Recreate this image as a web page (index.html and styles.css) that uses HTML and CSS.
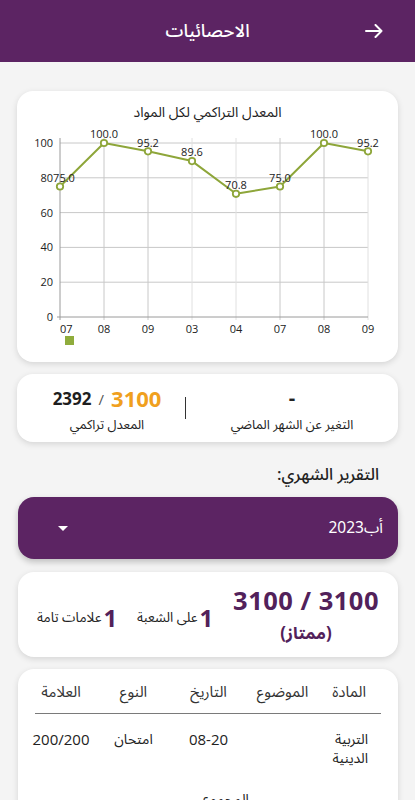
FILE: index.html
```html
<!DOCTYPE html>
<html lang="ar" dir="rtl">
<head>
<meta charset="utf-8">
<title>الاحصائيات</title>
<link rel="stylesheet" href="styles.css">
</head>
<body>
<header class="topbar">
  <span class="back" aria-label="رجوع">
    <svg width="18" height="14" viewBox="0 0 18 14"><path d="M1 7H16.5M10.5 1L16.5 7L10.5 13" fill="none" stroke="#fff" stroke-width="2" stroke-linecap="round" stroke-linejoin="round"/></svg>
  </span>
  <h1 class="title">الاحصائيات</h1>
  <span class="spacer"></span>
</header>
<main class="content">
  <section class="card chart-card">
    <svg class="chart" width="381" height="271" viewBox="0 0 381 271" direction="ltr">
      <text class="chart-title" x="190.5" y="26" text-anchor="middle" direction="rtl">المعدل التراكمي لكل المواد</text>
      <g class="grid-h">
        <line x1="43" y1="52" x2="351" y2="52"/>
        <line x1="43" y1="86.8" x2="351" y2="86.8"/>
        <line x1="43" y1="121.6" x2="351" y2="121.6"/>
        <line x1="43" y1="156.4" x2="351" y2="156.4"/>
        <line x1="43" y1="191.2" x2="351" y2="191.2"/>
      </g>
      <g class="grid-v">
        <line x1="87" y1="47" x2="87" y2="229"/>
        <line x1="131" y1="47" x2="131" y2="229"/>
        <line class="light" x1="175" y1="47" x2="175" y2="229"/>
        <line class="light" x1="219" y1="47" x2="219" y2="229"/>
        <line x1="263" y1="47" x2="263" y2="229"/>
        <line x1="307" y1="47" x2="307" y2="229"/>
        <line class="light" x1="351" y1="47" x2="351" y2="229"/>
      </g>
      <g class="axis">
        <line x1="43" y1="47" x2="43" y2="229"/>
        <line x1="40" y1="226" x2="351" y2="226"/>
      </g>
      <g class="ylab" text-anchor="end">
        <text x="36" y="230">0</text>
        <text x="36" y="195.2">20</text>
        <text x="36" y="160.4">40</text>
        <text x="36" y="125.6">60</text>
        <text x="36" y="90.8">80</text>
        <text x="36" y="56">100</text>
      </g>
      <g class="xlab" text-anchor="middle">
        <text x="43" y="242" text-anchor="start">07</text>
        <text x="87" y="242">08</text>
        <text x="131" y="242">09</text>
        <text x="175" y="242">03</text>
        <text x="219" y="242">04</text>
        <text x="263" y="242">07</text>
        <text x="307" y="242">08</text>
        <text x="351" y="242">09</text>
      </g>
      <polyline class="series" points="43,95.5 87,52 131,60.35 175,70.1 219,102.8 263,95.5 307,52 351,60.35"/>
      <g class="dots">
        <circle cx="43" cy="95.5" r="3.2"/>
        <circle cx="87" cy="52" r="3.2"/>
        <circle cx="131" cy="60.35" r="3.2"/>
        <circle cx="175" cy="70.1" r="3.2"/>
        <circle cx="219" cy="102.8" r="3.2"/>
        <circle cx="263" cy="95.5" r="3.2"/>
        <circle cx="307" cy="52" r="3.2"/>
        <circle cx="351" cy="60.35" r="3.2"/>
      </g>
      <g class="vlab" text-anchor="middle">
        <text x="47" y="91">75.0</text>
        <text x="87" y="47">100.0</text>
        <text x="131" y="55.5">95.2</text>
        <text x="175" y="65">89.6</text>
        <text x="219" y="98">70.8</text>
        <text x="263" y="90.5">75.0</text>
        <text x="307" y="47">100.0</text>
        <text x="351" y="55.5">95.2</text>
      </g>
      <rect class="legend" x="48" y="245" width="9" height="9"/>
    </svg>
  </section>

  <section class="card summary">
    <div class="sum-col sum-change">
      <div class="sum-val dash">-</div>
      <div class="sum-label">التغير عن الشهر الماضي</div>
    </div>
    <div class="divider"></div>
    <div class="sum-col sum-avg">
      <div class="sum-val" dir="ltr"><span class="of">2392</span><span class="slash">/</span><span class="main">3100</span></div>
      <div class="sum-label">المعدل تراكمي</div>
    </div>
  </section>

  <h2 class="section-title">التقرير الشهري:</h2>

  <div class="dropdown">
    <span class="dd-value">أب2023</span>
    <span class="caret"></span>
  </div>

  <section class="card stats">
    <div class="score">
      <div class="score-num" dir="ltr">3100 / 3100</div>
      <div class="score-grade">(ممتاز)</div>
    </div>
    <div class="stat"><span class="stat-num">1</span><span class="stat-label">على الشعبة</span></div>
    <div class="stat"><span class="stat-num">1</span><span class="stat-label">علامات تامة</span></div>
  </section>

  <section class="card table-card">
    <div class="trow thead">
      <span class="c1">المادة</span>
      <span class="c2">الموضوع</span>
      <span class="c3">التاريخ</span>
      <span class="c4">النوع</span>
      <span class="c5">العلامة</span>
    </div>
    <div class="thead-line"></div>
    <div class="trow tbody">
      <span class="c1">التربية الدينية</span>
      <span class="c2"></span>
      <span class="c3 num">08-20</span>
      <span class="c4">امتحان</span>
      <span class="c5 num">200/200</span>
    </div>
    <div class="total">المجموع</div>
  </section>
</main>
</body>
</html>
```

FILE: styles.css
```css
* { box-sizing: border-box; }
html, body { margin: 0; padding: 0; }
body {
  width: 415px;
  min-height: 800px;
  background: #f4f4f4;
  font-family: "Noto Sans Arabic", "DejaVu Sans", "Noto Sans", sans-serif;
  color: #222;
  overflow: hidden;
}
.topbar {
  height: 62px;
  background: #5c2463;
  display: grid;
  grid-template-columns: 1fr auto 1fr;
  align-items: center;
  padding: 0 32px;
}
.back { display: flex; justify-content: flex-start; }
.back svg { display: block; }
.title {
  margin: 0;
  color: #fff;
  font-size: 18px;
  font-weight: 500;
  line-height: 24px;
}
.content {
  padding: 29px 17px 0;
  display: flex;
  flex-direction: column;
}
.card {
  background: #fff;
  border-radius: 16px;
  box-shadow: 0 2px 6px rgba(0,0,0,0.13);
}
.chart-card { height: 271px; overflow: hidden; }
.chart { display: block; font-family: "Open Sans", "DejaVu Sans", sans-serif; }
.chart-title { font-size: 14px; fill: #222; font-family: "Noto Sans Arabic", "DejaVu Sans", sans-serif; }
.grid-h line, .grid-v line { stroke: #c8c8c8; stroke-width: 1; }
.grid-v line.light { stroke: #e0e0e0; }
.axis line { stroke: #9a9a9a; stroke-width: 1; }
.ylab text, .xlab text, .vlab text { font-size: 11px; fill: #222; }
.series { fill: none; stroke: #8ea63a; stroke-width: 2; stroke-linejoin: round; }
.dots circle { fill: #fff; stroke: #8ea63a; stroke-width: 1.8; }
.legend { fill: #8fac3c; }

.summary {
  margin-top: 12px;
  height: 68px;
  display: grid;
  grid-template-columns: 212px 1px 1fr;
  align-items: center;
  padding-left: 12px;
}
.sum-col { display: flex; flex-direction: column; align-items: center; gap: 3px; }
.sum-val {
  font-family: "Open Sans", "DejaVu Sans", sans-serif;
  font-weight: 700;
  line-height: 30px;
  height: 30px;
  display: flex;
  align-items: center;
  gap: 7px;
}
.sum-val .of { font-size: 17px; color: #1e1e1e; padding-top: 3px; }
.sum-val .slash { font-size: 15px; font-weight: 400; color: #555; padding-top: 3px; }
.sum-val .main { font-size: 22px; color: #f0a01e; }
.dash { font-size: 20px; color: #222; }
.sum-label { font-size: 13px; line-height: 18px; height: 18px; color: #222; }
.divider { width: 1px; height: 22px; background: #333; }

.section-title {
  margin: 19px 0 0;
  padding-right: 19px;
  font-size: 16.5px;
  font-weight: 500;
  line-height: 28px;
  color: #222;
}
.dropdown {
  margin-top: 8px;
  height: 62px;
  width: 380px;
  border-radius: 16px;
  background: #5c2463;
  box-shadow: 0 3px 6px rgba(0,0,0,0.22);
  display: flex;
  align-items: center;
  justify-content: space-between;
  padding: 0 15px 0 40px;
  color: #fff;
}
.dd-value { font-size: 15.5px; line-height: 20px; }
.caret {
  width: 0; height: 0;
  border-left: 5.5px solid transparent;
  border-right: 5.5px solid transparent;
  border-top: 5.5px solid #fff;
}
.stats {
  margin-top: 13px;
  width: 380px;
  height: 85px;
  display: flex;
  align-items: center;
  justify-content: space-between;
  padding: 0 19px;
  color: #52215a;
}
.score { display: flex; flex-direction: column; align-items: center; gap: 4px; }
.score-num {
  font-family: "Open Sans", "DejaVu Sans", sans-serif;
  font-weight: 700;
  font-size: 25.5px;
  line-height: 35px;
  letter-spacing: 0.5px;
}
.score-grade { font-weight: 700; font-size: 17px; line-height: 24px; }
.stat { display: flex; align-items: center; gap: 2px; margin-top: 6px; }
.stat-num { font-family: "Open Sans", "DejaVu Sans", sans-serif; font-weight: 700; font-size: 24px; line-height: 33px; }
.stat-label { font-size: 13.5px; color: #222; }

.table-card {
  margin-top: 12px;
  width: 380px;
  height: 160px;
  padding: 12px 12px 0 8px;
  border-radius: 16px 16px 0 0;
}
.trow {
  display: grid;
  grid-template-columns: 67px 73px 75px 75px 70px;
  font-size: 14px;
}
.trow span { text-align: center; }
.trow .c1 { text-align: right; padding-right: 20px; }
.thead { font-size: 15px; line-height: 22px; color: #333; padding-bottom: 10px; }
.thead-line { height: 1px; background: #7a7a7a; margin: 0 5px 0 9px; }
.tbody { margin-top: 16px; line-height: 19px; color: #222; }
.tbody .c1 { padding-right: 18px; }
.tbody .num { font-family: "Open Sans", "DejaVu Sans", sans-serif; font-size: 15px; }
.total { margin-top: 22px; font-size: 14px; line-height: 20px; text-align: center; padding-left: 40px; }
```
